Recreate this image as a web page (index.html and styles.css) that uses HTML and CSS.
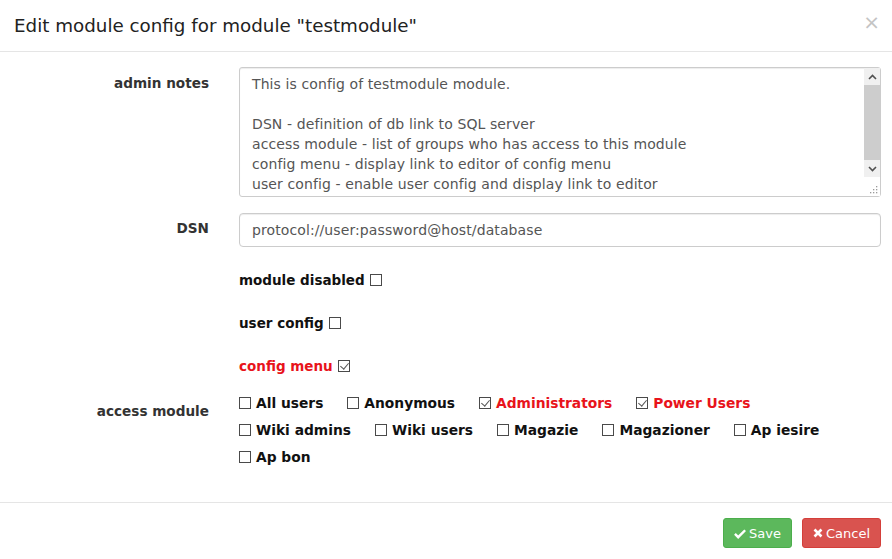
FILE: index.html
```html
<!DOCTYPE html>
<html>
<head>
<meta charset="utf-8">
<link rel="stylesheet" href="styles.css">
</head>
<body>
<div class="modal">
  <div class="modal-header">
    <h4 class="modal-title">Edit module config for module "testmodule"</h4>
    <span class="close">×</span>
  </div>
  <div class="modal-body">
    <div class="row">
      <label class="row-label">admin notes</label>
      <div class="textarea">
        <div class="textarea-content">This is config of testmodule module.<br><br>DSN - definition of db link to SQL server<br>access module - list of groups who has access to this module<br>config menu - display link to editor of config menu<br>user config - enable user config and display link to editor</div>
        <div class="scrollbar">
          <div class="sb-arrow"><svg width="9" height="6" viewBox="0 0 9 6"><path d="M1 5 L4.5 1.5 L8 5" fill="none" stroke="#505050" stroke-width="1.6"/></svg></div>
          <div class="sb-thumb"></div>
          <div class="sb-arrow"><svg width="9" height="6" viewBox="0 0 9 6"><path d="M1 1 L4.5 4.5 L8 1" fill="none" stroke="#505050" stroke-width="1.6"/></svg></div>
          <div class="sb-grip"><svg width="8" height="8" viewBox="0 0 8 8" fill="#9a9a9a"><rect x="6" y="0" width="1.3" height="1.3"/><rect x="3" y="3" width="1.3" height="1.3"/><rect x="6" y="3" width="1.3" height="1.3"/><rect x="0" y="6" width="1.3" height="1.3"/><rect x="3" y="6" width="1.3" height="1.3"/><rect x="6" y="6" width="1.3" height="1.3"/></svg></div>
        </div>
      </div>
    </div>
    <div class="row row-dsn">
      <label class="row-label">DSN</label>
      <div class="input">protocol://user:password@host/database</div>
    </div>
    <div class="row row-check">
      <span></span>
      <div class="check-line">module disabled <span class="cb"></span></div>
    </div>
    <div class="row row-check">
      <span></span>
      <div class="check-line">user config <span class="cb"></span></div>
    </div>
    <div class="row row-check">
      <span></span>
      <div class="check-line red">config menu <span class="cb checked"></span></div>
    </div>
    <div class="row row-access">
      <label class="row-label">access module</label>
      <div class="groups">
        <span class="grp"><span class="cb"></span>All users</span>
        <span class="grp"><span class="cb"></span>Anonymous</span>
        <span class="grp red"><span class="cb checked"></span>Administrators</span>
        <span class="grp red"><span class="cb checked"></span>Power Users</span>
        <span class="grp"><span class="cb"></span>Wiki admins</span>
        <span class="grp"><span class="cb"></span>Wiki users</span>
        <span class="grp"><span class="cb"></span>Magazie</span>
        <span class="grp"><span class="cb"></span>Magazioner</span>
        <span class="grp"><span class="cb"></span>Ap iesire</span>
        <span class="grp"><span class="cb"></span>Ap bon</span>
      </div>
    </div>
  </div>
  <div class="modal-footer">
    <button class="btn btn-save"><svg width="13" height="11" viewBox="0 0 13 11"><path d="M1 6 L4.5 9.5 L12 2" fill="none" stroke="#fff" stroke-width="2.6"/></svg>Save</button>
    <button class="btn btn-cancel"><svg width="10" height="10" viewBox="0 0 10 10"><path d="M1.5 1.5 L8.5 8.5 M8.5 1.5 L1.5 8.5" fill="none" stroke="#fff" stroke-width="2.6"/></svg>Cancel</button>
  </div>
</div>
</body>
</html>
```
FILE: styles.css
```css
* { box-sizing: border-box; }
html, body { margin: 0; padding: 0; background: #fff; }
body {
  font-family: "DejaVu Sans", Verdana, sans-serif;
  color: #333;
  font-size: 13px;
}
.modal { width: 892px; height: 559px; display: flex; flex-direction: column; }
.modal-header {
  height: 52px;
  border-bottom: 1px solid #e5e5e5;
  display: flex;
  align-items: center;
  justify-content: space-between;
  padding: 0 12px 0 14px;
}
.modal-title {
  margin: 0;
  font-size: 18.3px;
  font-weight: normal;
  color: #222;
  margin-top: 0;
}
.close {
  font-size: 20px;
  color: #c4c4c4;
  line-height: 1;
  margin-top: -8px;
}
.modal-body { padding: 15px 11px 0 15px; flex: 1; }
.row {
  display: grid;
  grid-template-columns: 194px 1fr;
  column-gap: 30px;
}
.row-label {
  text-align: right;
  font-weight: bold;
  font-size: 13.6px;
  color: #333;
  padding-top: 8px;
}
.textarea {
  height: 130px;
  border: 1px solid #ccc;
  border-radius: 3px;
  display: flex;
  box-shadow: inset 0 1px 1px rgba(0,0,0,.075);
}
.textarea-content {
  flex: 1;
  padding: 6px 12px;
  line-height: 20px;
  font-size: 14px;
  letter-spacing: 0.1px;
  color: #555;
  overflow: hidden;
  white-space: nowrap;
}
.scrollbar {
  width: 16px;
  display: flex;
  flex-direction: column;
  background: #f0f0f0;
}
.sb-arrow { height: 17px; display: flex; align-items: center; justify-content: center; }
.sb-thumb { height: 75px; background: #cdcdcd; }
.sb-grip { flex: 1; background: #fff; display: flex; align-items: flex-end; justify-content: flex-end; padding: 0 2px 2px 0; }
.row-dsn { margin-top: 16px; }
.row-dsn .row-label { padding-top: 7px; }
.input {
  height: 34px;
  border: 1px solid #ccc;
  border-radius: 4px;
  padding: 0 12px;
  line-height: 32px;
  font-size: 14px;
  letter-spacing: 0.1px;
  color: #555;
  box-shadow: inset 0 1px 1px rgba(0,0,0,.075);
}
.row-check { margin-top: 23px; }
.check-line {
  font-weight: bold;
  font-size: 13.5px;
  color: #111;
  height: 20px;
  display: flex;
  align-items: center;
  gap: 5px;
}
.red { color: #e8131b !important; }
.cb {
  display: inline-block;
  width: 12px;
  height: 12px;
  border: 1px solid #4a4a4a;
  background: #fff;
  position: relative;
  flex: none;
}
.cb.checked::after {
  content: "";
  position: absolute;
  left: 3px;
  top: 0px;
  width: 4px;
  height: 7px;
  border-right: 1.5px solid #555;
  border-bottom: 1.5px solid #555;
  transform: rotate(40deg);
}
.row-access { margin-top: 17px; }
.row-access .row-label { padding-top: 10px; }
.groups {
  display: flex;
  flex-wrap: wrap;
  column-gap: 24px;
  row-gap: 7px;
}
.grp {
  font-weight: bold;
  font-size: 13.8px;
  color: #111;
  height: 20px;
  display: flex;
  align-items: center;
  gap: 5px;
}
.modal-footer {
  height: 57px;
  border-top: 1px solid #e5e5e5;
  display: flex;
  justify-content: flex-end;
  align-items: flex-start;
  gap: 10px;
  padding: 15px 11px 0 0;
}
.btn {
  height: 30px;
  border-radius: 3px;
  border: 1px solid transparent;
  color: #fff;
  font-family: "DejaVu Sans", Verdana, sans-serif;
  font-size: 13px;
  padding: 0 10px;
  display: flex;
  align-items: center;
  gap: 3px;
}
.btn-save { background: #5cb85c; border-color: #4cae4c; width: 69px; }
.btn-cancel { background: #d9534f; border-color: #d43f3a; width: 79px; }
```
